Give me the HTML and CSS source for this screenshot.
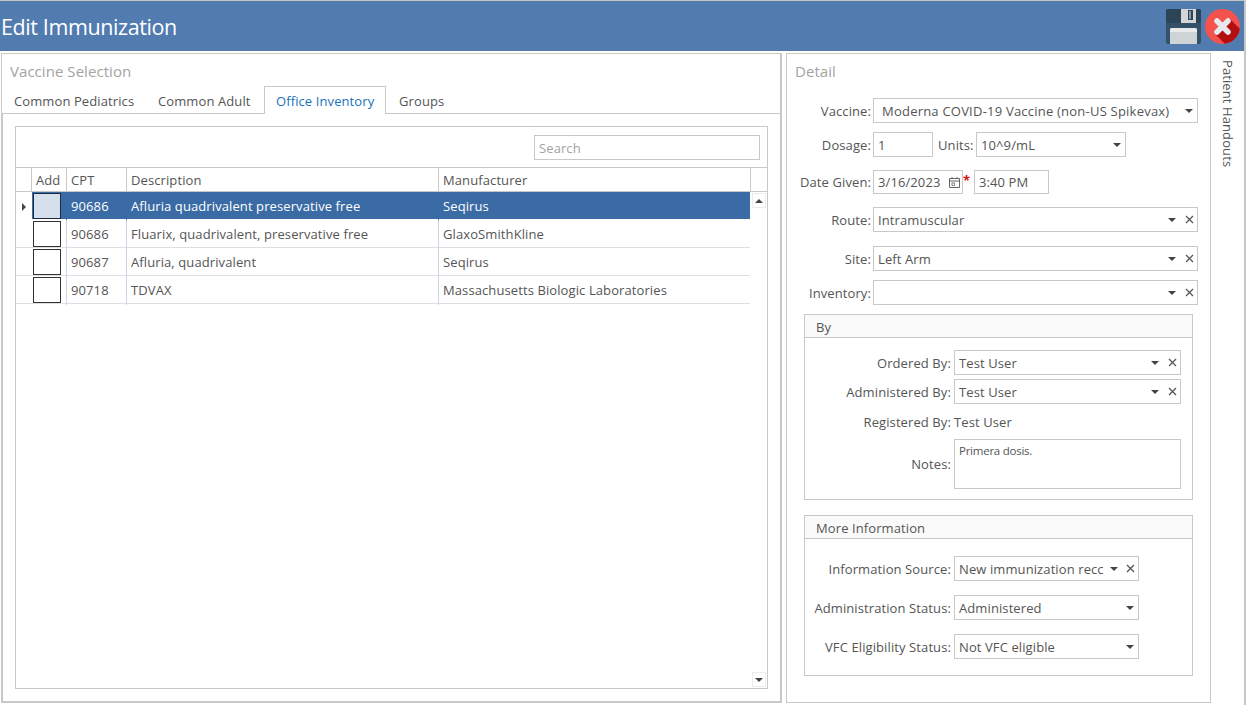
FILE: index.html
```html
<!DOCTYPE html>
<html lang="en">
<head>
<meta charset="utf-8">
<title>Edit Immunization</title>
<link rel="stylesheet" href="styles.css">
</head>
<body>
<svg class="defs" width="0" height="0" aria-hidden="true">
  <symbol id="clear" viewBox="0 0 9 9"><path d="M1 1 8 8M8 1 1 8" fill="none" stroke="#555" stroke-width="1.3"/></symbol>
</svg>
<div class="window">
  <header class="titlebar">
    <h1 class="title">Edit Immunization</h1>
    <div class="actions">
      <svg class="save" width="35" height="35" viewBox="0 0 35 35">
        <rect width="35" height="35" rx="2" fill="#355168"/>
        <rect width="35" height="14" rx="2" fill="#2c4456"/>
        <path d="M15 0h15v14H15z" fill="#d3d6d8"/>
        <rect x="22" y="1" width="5" height="10" fill="#2c4456"/>
        <rect x="23" y="2" width="2" height="8" fill="#8c9aa5"/>
        <path d="M4 21a2 2 0 0 1 2-2h23a2 2 0 0 1 2 2v14H4z" fill="#ced3d6"/>
        <path d="M4 21a2 2 0 0 1 2-2h23a2 2 0 0 1 2 2v2H4z" fill="#e8eaeb"/>
      </svg>
      <svg class="close" width="35" height="35" viewBox="0 0 35 35">
        <circle cx="17.5" cy="17.5" r="17.5" fill="#f4524d"/>
        <path d="M25 10 34.8 19.8A17.5 17.5 0 0 1 19.8 34.8L10 25z" fill="#b30f0f"/>
        <path d="M12 12 23 23M23 12 12 23" fill="none" stroke="#e6e9ee" stroke-width="5.5" stroke-linecap="round"/>
      </svg>
    </div>
  </header>
  <main class="main">
    <section class="panel vaccine">
      <div class="panel-title">Vaccine Selection</div>
      <nav class="tabs">
        <span class="tab">Common Pediatrics</span>
        <span class="tab">Common Adult</span>
        <span class="tab active">Office Inventory</span>
        <span class="tab">Groups</span>
      </nav>
      <div class="tab-body">
        <div class="grid-box">
          <div class="search-bar"><div class="search">Search</div></div>
          <div class="grid-head">
            <span class="hcell"></span>
            <span class="hcell">Add</span>
            <span class="hcell">CPT</span>
            <span class="hcell">Description</span>
            <span class="hcell">Manufacturer</span>
            <span class="hcell last"></span>
          </div>
          <div class="grid-scroll">
            <div class="rows">
              <div class="row selected">
                <span class="cell marker"><i class="pointer"></i></span>
                <span class="cell check"><i class="box"></i></span>
                <span class="cell">90686</span>
                <span class="cell">Afluria quadrivalent preservative free</span>
                <span class="cell">Seqirus</span>
              </div>
              <div class="row">
                <span class="cell marker"></span>
                <span class="cell check"><i class="box"></i></span>
                <span class="cell">90686</span>
                <span class="cell">Fluarix, quadrivalent, preservative free</span>
                <span class="cell">GlaxoSmithKline</span>
              </div>
              <div class="row">
                <span class="cell marker"></span>
                <span class="cell check"><i class="box"></i></span>
                <span class="cell">90687</span>
                <span class="cell">Afluria, quadrivalent</span>
                <span class="cell">Seqirus</span>
              </div>
              <div class="row">
                <span class="cell marker"></span>
                <span class="cell check"><i class="box"></i></span>
                <span class="cell">90718</span>
                <span class="cell">TDVAX</span>
                <span class="cell">Massachusetts Biologic Laboratories</span>
              </div>
            </div>
            <div class="scrollbar">
              <span class="sbtn"><i class="tri up"></i></span>
              <span class="sbtn"><i class="tri"></i></span>
            </div>
          </div>
        </div>
      </div>
    </section>

    <section class="panel detail">
      <div class="panel-title">Detail</div>
      <div class="form-row gap-none">
        <label class="lbl">Vaccine:</label>
        <div class="ctl full indent"><span class="val">Moderna COVID-19 Vaccine (non-US Spikevax)</span><i class="btn"><i class="tri"></i></i></div>
      </div>
      <div class="form-row gap-9">
        <label class="lbl">Dosage:</label>
        <div class="ctl dosage"><span class="val">1</span></div>
        <label class="lbl-inline">Units:</label>
        <div class="ctl units"><span class="val">10^9/mL</span><i class="btn"><i class="tri"></i></i></div>
      </div>
      <div class="form-row gap-13 short">
        <label class="lbl">Date Given:</label>
        <div class="ctl date"><span class="val">3/16/2023</span>
          <svg class="cal" width="13" height="13" viewBox="0 0 13 13"><path d="M1.5 2.5h10v9h-10zM1.5 5h10M4 1v2M9 1v2" fill="none" stroke="#666"/><rect x="4" y="7" width="2.5" height="2.5" fill="none" stroke="#666" stroke-width=".8"/></svg>
        </div>
        <span class="req">*</span>
        <div class="ctl time"><span class="val">3:40 PM</span></div>
      </div>
      <div class="form-row gap-13">
        <label class="lbl">Route:</label>
        <div class="ctl full"><span class="val">Intramuscular</span><i class="btn"><i class="tri"></i></i><i class="btn"><svg width="9" height="9"><use href="#clear"/></svg></i></div>
      </div>
      <div class="form-row gap-14">
        <label class="lbl">Site:</label>
        <div class="ctl full"><span class="val">Left Arm</span><i class="btn"><i class="tri"></i></i><i class="btn"><svg width="9" height="9"><use href="#clear"/></svg></i></div>
      </div>
      <div class="form-row gap-9">
        <label class="lbl">Inventory:</label>
        <div class="ctl full"><span class="val"></span><i class="btn"><i class="tri"></i></i><i class="btn"><svg width="9" height="9"><use href="#clear"/></svg></i></div>
      </div>

      <fieldset class="group by">
        <div class="group-head">By</div>
        <div class="group-body">
          <div class="form-row">
            <label class="lbl wide">Ordered By:</label>
            <div class="ctl user"><span class="val">Test User</span><i class="btn"><i class="tri"></i></i><i class="btn"><svg width="9" height="9"><use href="#clear"/></svg></i></div>
          </div>
          <div class="form-row gap-4">
            <label class="lbl wide">Administered By:</label>
            <div class="ctl user"><span class="val">Test User</span><i class="btn"><i class="tri"></i></i><i class="btn"><svg width="9" height="9"><use href="#clear"/></svg></i></div>
          </div>
          <div class="form-row plain">
            <label class="lbl wide">Registered By:</label>
            <span class="static">Test User</span>
          </div>
          <div class="form-row notes-row">
            <label class="lbl wide">Notes:</label>
            <div class="notes">Primera dosis.</div>
          </div>
        </div>
      </fieldset>

      <fieldset class="group more">
        <div class="group-head">More Information</div>
        <div class="group-body body-more">
          <div class="form-row">
            <label class="lbl wide">Information Source:</label>
            <div class="ctl info"><span class="val">New immunization recc</span><i class="btn tight"><i class="tri"></i></i><i class="btn"><svg width="9" height="9"><use href="#clear"/></svg></i></div>
          </div>
          <div class="form-row gap-14">
            <label class="lbl wide">Administration Status:</label>
            <div class="ctl info"><span class="val">Administered</span><i class="btn"><i class="tri"></i></i></div>
          </div>
          <div class="form-row gap-14">
            <label class="lbl wide">VFC Eligibility Status:</label>
            <div class="ctl info"><span class="val">Not VFC eligible</span><i class="btn"><i class="tri"></i></i></div>
          </div>
        </div>
      </fieldset>
    </section>

    <aside class="side"><span class="side-text">Patient Handouts</span></aside>
  </main>
</div>
</body>
</html>
```
FILE: styles.css
```css
* { box-sizing: border-box; }
html, body { margin: 0; height: 100%; background: #fff; overflow: hidden; }
body {
  font-family: "Open Sans", "Noto Sans", "Liberation Sans", sans-serif;
  font-size: 13px;
  letter-spacing: 0.1px;
  color: #555;
}
i { font-style: normal; display: block; }
.defs { position: absolute; }

.window {
  width: 1246px;
  height: 705px;
  border-top: 1px solid #c4c4c4;
  border-right: 2px solid #c8c8c8;
  display: flex;
  flex-direction: column;
}
.titlebar {
  height: 50px;
  background: #527bb0;
  display: flex;
  align-items: center;
  justify-content: space-between;
  padding-left: 1px;
}
.title {
  margin: 0;
  font-size: 21.5px;
  font-weight: 400;
  letter-spacing: -0.4px;
  color: #fff;
}
.actions { display: flex; gap: 4px; padding-right: 4px; }
.save, .close { display: block; }

.main { display: flex; padding: 2px 0 0 1px; }
.panel {
  height: 650px;
  border: 1px solid #c8c8c8;
  flex: none;
}
.panel-title {
  height: 32px;
  padding: 8px 0 0 8px;
  font-size: 15px;
  line-height: 18px;
  letter-spacing: 0.05px;
  color: #a3a3a3;
}
.vaccine {
  width: 781px;
  border-right-width: 2px;
  border-bottom-width: 2px;
  display: flex;
  flex-direction: column;
}
.tabs {
  height: 28px;
  display: flex;
  padding-left: 0;
  border-bottom: 1px solid #c8c8c8;
}
.tab {
  height: 28px;
  line-height: 30px;
  padding: 0 12px;
  white-space: nowrap;
}
.tab:first-child { width: 144px; }
.tab:nth-child(2) { width: 118px; }
.tab:last-child { padding-left: 13px; }
.tab.active {
  width: 122px;
  background: #fff;
  color: #1a72bb;
  border: 1px solid #c8c8c8;
  border-bottom: 0;
  padding: 0 11px;
  line-height: 28px;
}
.tab-body {
  flex: 1;
  min-height: 0;
  margin-left: 0;
  border-left: 1px solid #c8c8c8;
  padding: 12px 12px 12px 12px;
}
.grid-box {
  height: 100%;
  border: 1px solid #c8c8c8;
  display: flex;
  flex-direction: column;
}
.search-bar {
  height: 40px;
  padding: 8px 7px 0 0;
  display: flex;
  justify-content: flex-end;
}
.search {
  width: 226px;
  height: 25px;
  border: 1px solid #c8c8c8;
  padding-left: 4px;
  line-height: 24px;
  color: #a3a3a3;
}
.grid-head, .row {
  display: grid;
  grid-template-columns: 16px 35px 60px 312px 311px;
}
.grid-head {
  grid-template-columns: 16px 35px 60px 312px 312px 1fr;
  height: 25px;
  border-top: 1px solid #c8c8c8;
  border-bottom: 1px solid #c8c8c8;
}
.hcell {
  border-right: 1px solid #c8c8c8;
  padding-left: 4px;
  line-height: 24px;
  white-space: nowrap;
}
.hcell.last { border-right: 0; }
.grid-scroll { flex: 1; display: flex; min-height: 0; }
.rows { width: 734px; flex: none; }
.row {
  height: 28px;
  border-bottom: 1px solid #dcdfe3;
}
.cell {
  border-right: 1px solid #c9d6e4;
  padding-left: 4px;
  line-height: 29px;
  white-space: nowrap;
}
.cell:last-child { border-right: 0; }
.marker { border-right: 0; padding: 0; display: flex; align-items: center; justify-content: center; }
.check { padding: 1px 0 0 1px; }
.box {
  width: 28px;
  height: 26px;
  background: #fff;
  border: 1px solid #333;
}
.pointer {
  width: 0;
  height: 0;
  border-left: 4px solid #444;
  border-top: 4px solid transparent;
  border-bottom: 4px solid transparent;
}
.row.selected {
  background: #3a6ba5;
  color: #fff;
  border-bottom-color: #fff;
}
.row.selected .cell { border-right-color: #3a6ba5; }
.row.selected .marker { background: #fff; }
.row.selected .box { background: #d6e0ec; border-color: #1c2c40; }
.scrollbar {
  flex: 1;
  padding: 1px 1px 1px 2px;
  display: flex;
  flex-direction: column;
  justify-content: space-between;
}
.sbtn {
  height: 15px;
  border: 1px solid #ececec;
  display: flex;
  align-items: center;
  justify-content: center;
}

.tri {
  width: 0;
  height: 0;
  border-left: 4px solid transparent;
  border-right: 4px solid transparent;
  border-top: 4px solid #444;
}
.tri.up { border-top: 0; border-bottom: 4px solid #444; }

.detail {
  width: 425px;
  margin-left: 4px;
  padding-left: 8px;
}
.detail .panel-title { height: 44px; padding-left: 0; }
.form-row { display: flex; height: 25px; align-items: center; }
.form-row.short { height: 24px; }
.gap-4 { margin-top: 4px; }
.gap-9 { margin-top: 9px; }
.gap-13 { margin-top: 13px; }
.gap-14 { margin-top: 14px; }
.lbl {
  width: 77px;
  margin-left: -1px;
  margin-right: 2px;
  text-align: right;
  white-space: nowrap;
  flex: none;
}
.lbl.wide { width: 146px; margin-left: 0; margin-right: 3px; }
.lbl-inline { margin-left: 5px; width: 38px; white-space: nowrap; }
.ctl {
  height: 100%;
  border: 1px solid #c8c8c8;
  display: flex;
  align-items: center;
  padding-left: 4px;
  flex: none;
  white-space: nowrap;
}
.ctl.indent { padding-left: 8px; letter-spacing: 0.22px; }
.val { flex: 1; min-width: 0; overflow: hidden; }
.btn {
  width: 17px;
  height: 100%;
  display: flex;
  align-items: center;
  justify-content: center;
  flex: none;
}
.btn svg { display: block; margin-left: 1px; }
.full { width: 325px; }
.dosage { width: 60px; }
.units { width: 150px; }
.date { width: 90px; padding-right: 1px; }
.cal { flex: none; }
.req {
  width: 11px;
  color: #e01010;
  font-weight: 700;
  line-height: 1;
  align-self: flex-start;
  margin-top: 4px;
}
.time { width: 75px; }

.group {
  margin: 9px 0 0 9px;
  padding: 0;
  width: 389px;
  border: 1px solid #c8c8c8;
  min-width: 0;
}
.more { margin-top: 15px; height: 161px; }
.by { height: 186px; }
.group-head {
  height: 23px;
  background: #fafafa;
  border-bottom: 1px solid #c8c8c8;
  padding-left: 11px;
  line-height: 24px;
}
.group-body { padding: 12px 11px 0 0; }
.body-more { padding-top: 17px; }
.user { width: 227px; }
.info { width: 185px; }
.btn.tight { width: 14px; }
.plain { height: 22px; margin-top: 7px; }
.notes-row { height: 50px; margin-top: 6px; }
.notes {
  width: 227px;
  height: 50px;
  border: 1px solid #c8c8c8;
  padding: 3px 4px;
  font-size: 11.5px;
  line-height: 16px;
  letter-spacing: -0.25px;
}

.side { width: 33px; flex: none; padding: 7px 0 0 9px; }
.side-text { writing-mode: vertical-rl; display: block; line-height: 15px; white-space: nowrap; }
```
